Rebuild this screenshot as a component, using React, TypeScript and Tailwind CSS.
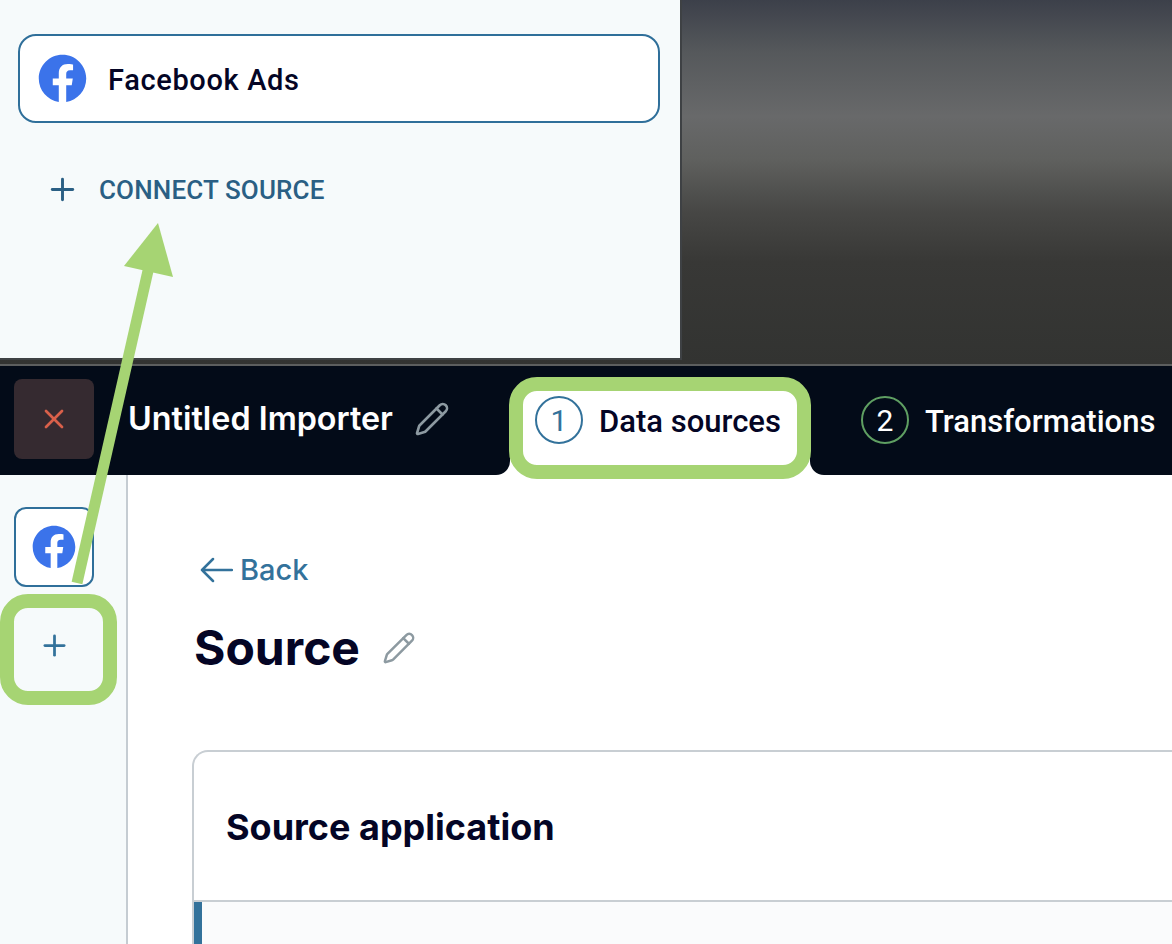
import { Pencil, Plus, X } from 'lucide-react'
import { FaFacebook } from 'react-icons/fa'

export default function App() {
  return (
    <div className="relative w-[1172px] h-[944px] overflow-hidden bg-white font-['Inter',sans-serif]">
      {/* Top crop: source list over dimmed page */}
      <div className="h-[364px] bg-[linear-gradient(180deg,#3c404a_0%,#55585b_14%,#68696a_32%,#5f605e_44%,#474745_58%,#383836_72%,#323331_100%)]">
        <div className="w-[682px] h-[360px] bg-[#f6fafb] border-r-2 border-b-2 border-[#3e4144] pt-[34px] px-[18px] box-border">
          <div className="w-[642px] h-[89px] bg-white border-2 border-[#2f6f9a] rounded-[18px] flex items-center pl-[18px] gap-[21px]">
            <FaFacebook className="text-[#3b73ea]" size={49} />
            <span className="pt-[5px] font-['Roboto',sans-serif] font-medium text-[29px] text-[#040525] tracking-[0.65px]">Facebook Ads</span>
          </div>
          <div className="flex items-center mt-[46px] pl-[27px] gap-[19px] text-[#2a5f84]">
            <Plus size={35} strokeWidth={2} />
            <span className="pt-[2px] font-['Roboto',sans-serif] font-medium text-[26px] tracking-[0.15px]">CONNECT SOURCE</span>
          </div>
        </div>
      </div>

      <div className="h-[2px] bg-[#5c5e5e]" />

      {/* Header bar, white shows through under the active tab's corners */}
      <div className="h-[109px] flex bg-[linear-gradient(180deg,#030b18_0,#030b18_85px,#ffffff_85px)]">
        <div className="w-[510px] shrink-0 bg-[#030b18] rounded-br-[14px] flex">
          <div className="w-[80px] h-[80px] ml-[14px] mt-[13px] rounded-lg bg-[#352a30] flex items-center justify-center text-[#d9604a]">
            <X size={32} strokeWidth={2} />
          </div>
          <div className="flex items-center h-[80px] mt-[13px] ml-[34px]">
            <span className="text-[32.3px] font-semibold text-white whitespace-nowrap">Untitled Importer</span>
            <Pencil className="ml-[21px] text-[#8d9aa1]" size={36} strokeWidth={1.75} />
          </div>
        </div>
        <div className="w-[300px] shrink-0 h-[109px] pt-[25px]">
          <div className="h-[84px] bg-white rounded-t-2xl flex items-start pl-[25px] pt-[5px]">
            <div className="w-[48px] h-[48px] rounded-full border-2 border-[#33729b] text-[#33729b] flex items-center justify-center font-['Roboto',sans-serif] text-[30px]">1</div>
            <span className="ml-[16px] mt-[3px] font-['Roboto',sans-serif] font-medium text-[31px] text-[#040525] whitespace-nowrap">Data sources</span>
          </div>
        </div>
        <div className="flex-1 bg-[#030b18] rounded-bl-[14px] flex items-start pt-[30px] pl-[51px] min-w-0">
          <div className="w-[48px] h-[48px] shrink-0 rounded-full border-2 border-[#5f9f62] text-white flex items-center justify-center font-['Roboto',sans-serif] text-[30px]">2</div>
          <span className="ml-[16px] mt-[3px] font-['Roboto',sans-serif] font-medium text-[31px] text-white whitespace-nowrap">Transformations</span>
        </div>
      </div>

      {/* Body */}
      <div className="flex h-[469px]">
        <div className="w-[128px] shrink-0 bg-[#f6fafb] border-r-2 border-[#c5ccd2] pt-[32px] pl-[14px]">
          <div className="w-[80px] h-[80px] bg-white border-2 border-[#2f6f9a] rounded-xl flex items-center justify-center">
            <FaFacebook className="text-[#3b73ea]" size={44} />
          </div>
          <div className="w-[80px] h-[80px] mt-[18px] flex items-center justify-center text-[#33729b]">
            <Plus size={33} strokeWidth={2} />
          </div>
        </div>
        <div className="flex-1 pl-[64px] pt-[76px] min-w-0">
          <div className="flex items-center pl-[8px] gap-[7px] text-[#33729b]">
            <svg width="33" height="26" viewBox="0 0 33 26" fill="none" stroke="currentColor" strokeWidth="2.5" strokeLinecap="round" strokeLinejoin="round">
              <path d="M2 13H32M13 2L2 13L13 24" />
            </svg>
            <span className="text-[29px] font-medium leading-[38px]">Back</span>
          </div>
          <div className="flex items-center mt-[31px] pl-[2px]">
            <span className="text-[48px] font-bold text-[#040525] leading-[56px]">Source</span>
            <Pencil className="ml-[22px] text-[#8d9aa1]" size={34} strokeWidth={1.75} />
          </div>
          <div className="w-[1100px] h-[260px] mt-[74px] border-l-2 border-t-2 border-[#c8ced3] rounded-tl-2xl">
            <div className="h-[150px] flex items-center pl-[32px] pt-[2px] border-b-2 border-[#c8ced3]">
              <span className="text-[36px] font-bold text-[#040525]">Source application</span>
            </div>
            <div className="h-[110px] bg-[#fafbfc] border-l-[8px] border-[#33729b]" />
          </div>
        </div>
      </div>

      {/* Green annotations laid over the screenshot */}
      <div className="absolute left-[509px] top-[377px] w-[302px] h-[102px] border-[14px] border-[#a6d473] rounded-[28px]" />
      <div className="absolute left-0 top-[594px] w-[117px] h-[111px] border-[14px] border-[#a6d473] rounded-[28px]" />
      <svg className="absolute left-0 top-0" width="200" height="600" viewBox="0 0 200 600">
        <line x1="77" y1="583" x2="150" y2="262" stroke="#a6d473" strokeWidth="11" />
        <polygon points="158,223 124,266 173,277" fill="#a6d473" />
      </svg>
    </div>
  )
}
